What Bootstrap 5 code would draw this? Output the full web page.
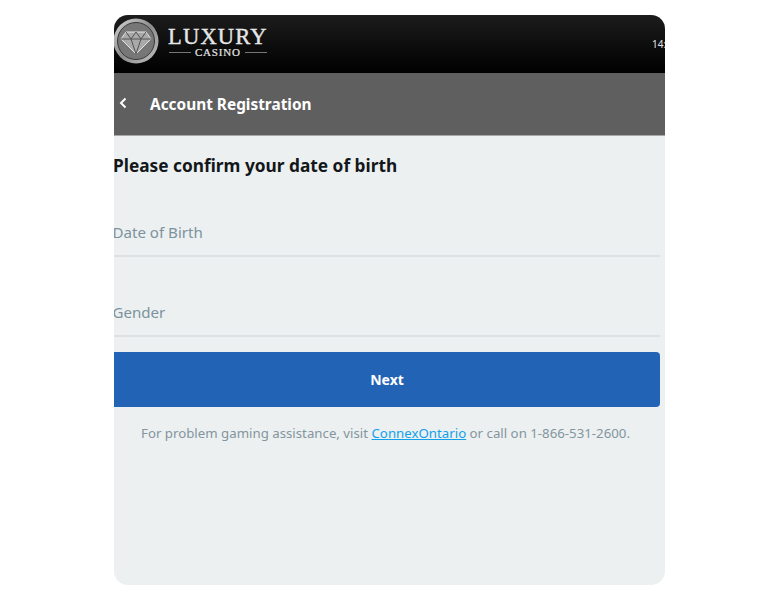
<!doctype html>
<html lang="en"><head><meta charset="utf-8"><title>Account Registration</title>
<link href="https://cdn.jsdelivr.net/npm/bootstrap@5.3.0/dist/css/bootstrap.min.css" rel="stylesheet">
<style>
html,body{height:100%;background:#fff}
body{font-family:"Noto Sans","Open Sans",sans-serif;padding:15px 0}
.phone{width:551px;height:570px;margin-left:114px;background:#ecf0f1;border-radius:14px;overflow:hidden}
.topbar{height:58px;background:linear-gradient(#1c1c1c,#000);color:#fff}
.logo-mark{flex:none;margin:-6px 0 0 -1px}
.logo-word{font-family:"Liberation Serif",serif;color:#e6e6e6;line-height:1;margin:-3px 0 0 9px}
.logo-big{font-size:22.5px;line-height:20px;letter-spacing:1.2px;font-weight:400;-webkit-text-stroke:.4px #e6e6e6}
.logo-small{font-size:11px;letter-spacing:.8px;gap:4px;-webkit-text-stroke:.2px #e6e6e6}
.logo-rule{width:22px;height:1px;background:#777}
.clock{font-size:10px;margin-left:auto;margin-right:-8px;color:#e4e4e4;width:21px;margin-top:1px}
.titlebar{height:63px;background:#5f5f5f;color:#fff;border-bottom:1px solid #a5a9aa}
.back-ico{margin-left:5px;margin-right:23px;margin-top:-3px}
.titlebar-text{font-size:15.4px;font-weight:700;margin-top:2px}
.lead-q{font-size:17.3px;font-weight:700;color:#14171a;margin:17px 0 0 -1px;line-height:25px}
.fld{height:80px;margin-right:5px;border-bottom:2px solid #dde1e3;font-size:15.1px;color:#7d929c;padding-bottom:11px;margin-left:-1.5px}
.fld-one{height:68px;margin-top:11px}
.go-btn{width:546px;height:55px;margin-top:15px;background:#2363b6;border:0;border-radius:0 4px 4px 0;color:#fff;font-weight:700;font-size:14px}
.go-btn:hover{background:#2363b6;color:#fff}
.help{font-size:13.25px;color:#84959e;margin:15px 0 0 27px;line-height:22px;white-space:nowrap}
.help a{color:#12a0ea}
</style></head>
<body>
<div class="phone d-flex flex-column">
  <header class="topbar d-flex align-items-center">
    <svg class="logo-mark" width="46" height="46" viewBox="0 0 46 46" aria-hidden="true">
      <defs><linearGradient id="rim" x1="0" y1="0" x2="1" y2="1"><stop offset="0" stop-color="#d8d8d8"/><stop offset=".5" stop-color="#8b8b8b"/><stop offset="1" stop-color="#c4c4c4"/></linearGradient></defs>
      <circle cx="23" cy="23" r="22.5" fill="url(#rim)"/>
      <circle cx="23" cy="23" r="18.5" fill="#777" stroke="#3a3a3a"/>
      <path d="M13 14H33L38 21 23 36 8 21Z" fill="#a9a9a9" stroke="#e4e4e4"/>
      <path d="M8 21H38M13 14 18 21 23 36 28 21 33 14M18 21 23 14 28 21" fill="none" stroke="#545454"/>
    </svg>
    <div class="logo-word">
      <div class="logo-big">LUXURY</div>
      <div class="logo-small d-flex align-items-center justify-content-center"><span class="logo-rule"></span>CASINO<span class="logo-rule"></span></div>
    </div>
    <span class="clock text-nowrap">14:4</span>
  </header>
  <div class="titlebar d-flex align-items-center">
    <svg class="back-ico" width="8" height="12" viewBox="0 0 8 12" aria-hidden="true"><path d="M6.5 1.5 2 6l4.5 4.5" fill="none" stroke="#fff" stroke-width="2"/></svg>
    <span class="titlebar-text">Account Registration</span>
  </div>
  <h1 class="lead-q">Please confirm your date of birth</h1>
  <div class="fld fld-one d-flex align-items-end">Date of Birth</div>
  <div class="fld d-flex align-items-end">Gender</div>
  <button class="btn go-btn" type="button">Next</button>
  <p class="help">For problem gaming assistance, visit <a href="#">ConnexOntario</a> or call on 1-866-531-2600.</p>
</div>
</body></html>
